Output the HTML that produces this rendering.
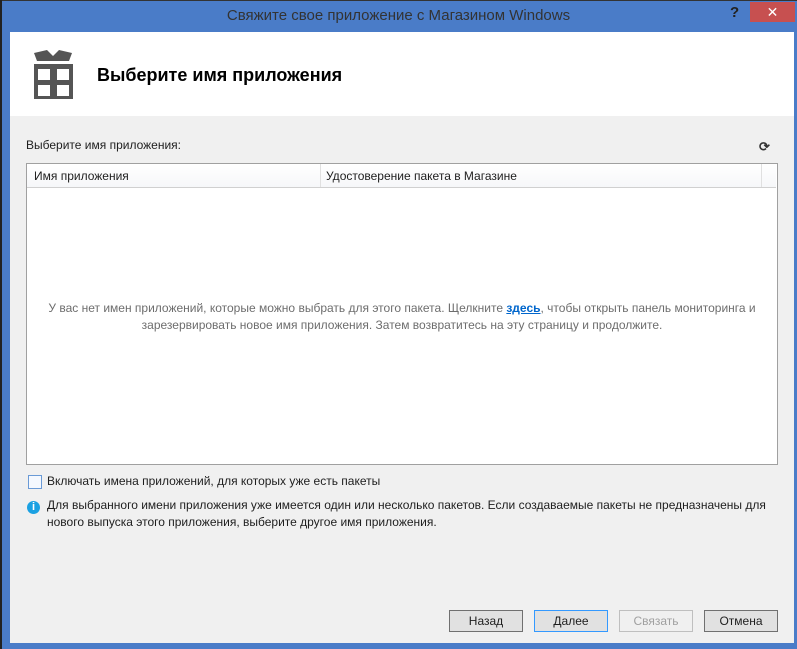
<!DOCTYPE html><html><head><meta charset="utf-8"><style>
body{margin:0;width:797px;height:649px;background:#4a7cc8;position:relative;overflow:hidden;font-family:"Liberation Sans",sans-serif;font-size:12px;color:#1e1e1e}
.a{position:absolute}
.btn{position:absolute;top:610px;width:72px;height:20px;border:1px solid #707070;background:#e1e1e1;text-align:center;line-height:20px;font-size:12px}
</style></head><body>
<div class="a" style="left:0;top:0;width:797px;height:1px;background:#333"></div>
<div class="a" style="left:0;top:0;width:2px;height:649px;background:#222"></div>
<div class="a" style="left:0;top:7px;width:797px;text-align:center;font-size:15px;color:#333">Свяжите свое приложение с Магазином Windows</div>
<div class="a" style="left:730px;top:4px;font-size:15px;font-weight:bold;color:#222">?</div>
<div class="a" style="left:750px;top:2px;width:45px;height:20px;background:#c75050;color:#fff;text-align:center;font-size:14px;line-height:20px">✕</div>
<div class="a" style="left:10px;top:32px;width:784px;height:611px;background:#f0f0f0"></div>
<div class="a" style="left:10px;top:32px;width:784px;height:84px;background:#fff"></div>
<svg class="a" style="left:33px;top:49px" width="41" height="51" viewBox="0 0 41 51"><path d="M1 4L14 1L20 7L26 1L39 4L36 12H4Z" fill="#555"/><rect x="1" y="15" width="39" height="35" fill="#555"/><rect x="5" y="20" width="12" height="11" fill="#fff"/><rect x="24" y="20" width="12" height="11" fill="#fff"/><rect x="5" y="36" width="12" height="11" fill="#fff"/><rect x="24" y="36" width="12" height="11" fill="#fff"/></svg>
<div class="a" style="left:97px;top:65px;font-size:18px;font-weight:bold;color:#000">Выберите имя приложения</div>
<div class="a" style="left:26px;top:138px">Выберите имя приложения:</div>
<div class="a" style="left:759px;top:139px;font-size:13px;font-weight:bold;color:#333">⟳</div>
<div class="a" style="left:26px;top:163px;width:750px;height:300px;border:1px solid #a0a0a0;background:#fff"></div>
<div class="a" style="left:27px;top:164px;width:749px;height:23px;border-bottom:1px solid #d0d0d0;background:linear-gradient(#fff,#f6f7f9)"></div>
<div class="a" style="left:320px;top:164px;width:1px;height:23px;background:#e0e0e0"></div>
<div class="a" style="left:761px;top:164px;width:1px;height:23px;background:#e0e0e0"></div>
<div class="a" style="left:34px;top:169px">Имя приложения</div>
<div class="a" style="left:326px;top:169px">Удостоверение пакета в Магазине</div>
<div class="a" style="left:26px;top:300px;width:752px;text-align:center;color:#6d6d6d;line-height:17px">У вас нет имен приложений, которые можно выбрать для этого пакета. Щелкните <u style="color:#0066cc;font-weight:bold">здесь</u>, чтобы открыть панель мониторинга и<br>зарезервировать новое имя приложения. Затем возвратитесь на эту страницу и продолжите.</div>
<div class="a" style="left:28px;top:475px;width:12px;height:12px;border:1px solid #6a9ad6;background:#f4f8fe"></div>
<div class="a" style="left:47px;top:474px">Включать имена приложений, для которых уже есть пакеты</div>
<div class="a" style="left:27px;top:501px;width:13px;height:13px;border-radius:50%;background:#1ba1e2;color:#fff;font-size:11px;font-weight:bold;text-align:center;line-height:13px">i</div>
<div class="a" style="left:47px;top:497px;line-height:17px;width:730px">Для выбранного имени приложения уже имеется один или несколько пакетов. Если создаваемые пакеты не предназначены для нового выпуска этого приложения, выберите другое имя приложения.</div>
<div class="btn" style="left:449px">Назад</div>
<div class="btn" style="left:534px;border-color:#3399ff">Далее</div>
<div class="btn" style="left:619px;border-color:#bfbfbf;background:#f0f0f0;color:#a0a0a0">Связать</div>
<div class="btn" style="left:704px">Отмена</div>
</body></html>
